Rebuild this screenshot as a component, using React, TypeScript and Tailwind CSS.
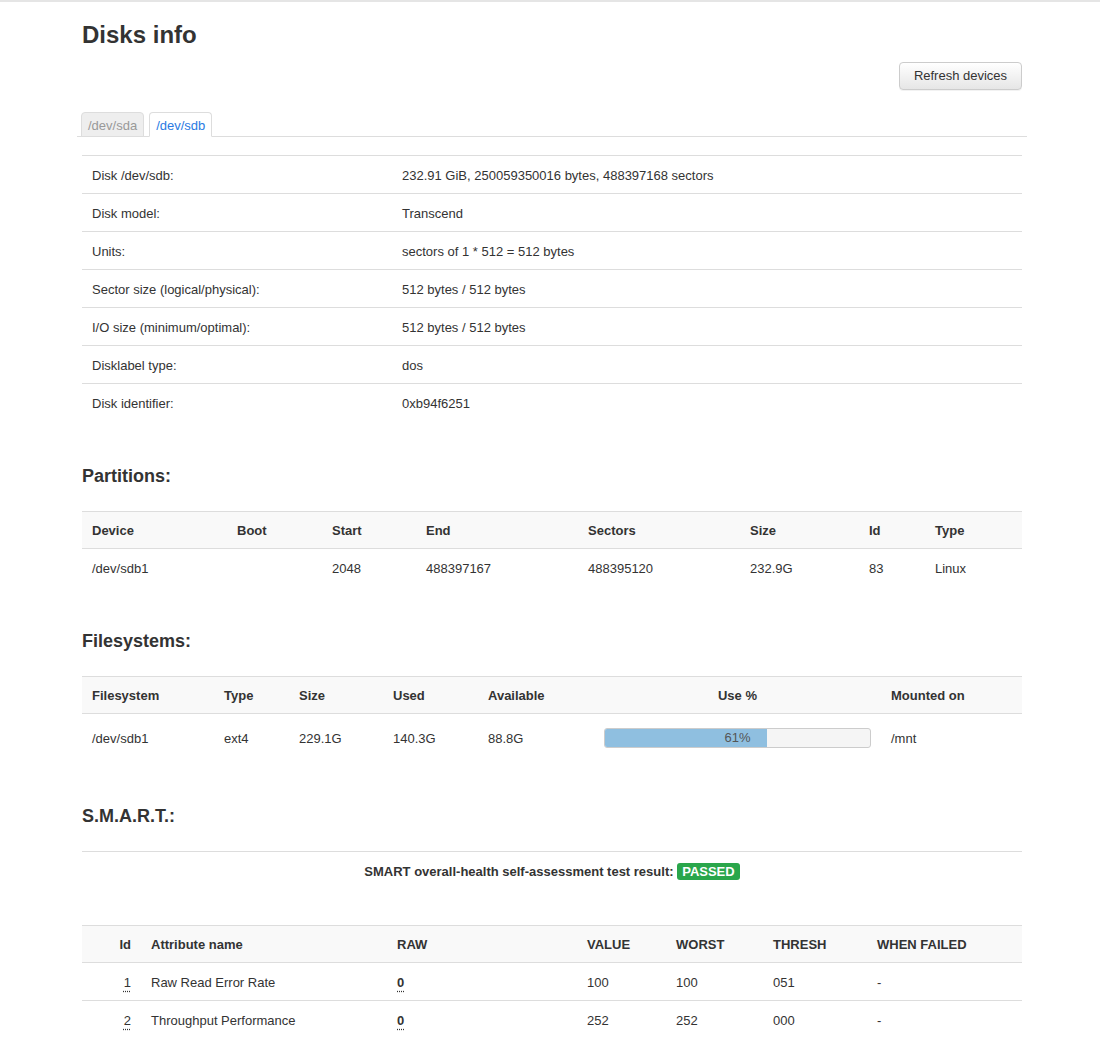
import React from 'react'

const info: [string, string][] = [
  ['Disk /dev/sdb:', '232.91 GiB, 250059350016 bytes, 488397168 sectors'],
  ['Disk model:', 'Transcend'],
  ['Units:', 'sectors of 1 * 512 = 512 bytes'],
  ['Sector size (logical/physical):', '512 bytes / 512 bytes'],
  ['I/O size (minimum/optimal):', '512 bytes / 512 bytes'],
  ['Disklabel type:', 'dos'],
  ['Disk identifier:', '0xb94f6251'],
]

const partCols = [
  ['Device', 'w-[145px]'],
  ['Boot', 'w-[95px]'],
  ['Start', 'w-[94px]'],
  ['End', 'w-[162px]'],
  ['Sectors', 'w-[162px]'],
  ['Size', 'w-[119px]'],
  ['Id', 'w-[66px]'],
  ['Type', 'w-[97px]'],
]
const partRow = ['/dev/sdb1', '', '2048', '488397167', '488395120', '232.9G', '83', 'Linux']

const smartRows = [
  { id: '1', name: 'Raw Read Error Rate', raw: '0', value: '100', worst: '100', thresh: '051', failed: '-' },
  { id: '2', name: 'Throughput Performance', raw: '0', value: '252', worst: '252', thresh: '000', failed: '-' },
]

function SectionTitle({ children }: { children: React.ReactNode }) {
  return <h3 className="text-[18px] font-bold leading-[20px]">{children}</h3>
}

const th = 'h-[37px] px-[10px] pt-[2px] text-left font-bold border-t border-b border-[#ddd] bg-[#f9f9f9]'
const td = 'px-[10px] pt-[2px]'

export default function App() {
  return (
    <main className="min-h-screen bg-white text-[13px] leading-[18px] text-[#333] font-['Liberation_Sans',Arial,sans-serif]">
      <div className="h-[2px] bg-[#e5e5e5]" />
      <div className="w-[940px] ml-[82px] pb-10">
        <h1 className="mt-[20px] text-[24px] font-bold leading-[26px]">Disks info</h1>

        <div className="flex justify-end mt-[14px]">
          <button className="h-[28px] w-[123px] rounded-[4px] border border-[#ccc] bg-gradient-to-b from-white to-[#e6e6e6] text-[13px] text-[#333] shadow-[0_1px_0_rgba(0,0,0,0.05)]">
            Refresh devices
          </button>
        </div>

        <div className="mt-[22px] -mx-[5px] pl-[4px] flex gap-[5px] border-b border-[#ddd]">
          <div className="h-[25px] px-[6px] pt-[4px] -mb-px rounded-t-[4px] border border-[#ddd] bg-[#eee] text-[#999]">
            /dev/sda
          </div>
          <div className="h-[25px] px-[6px] pt-[4px] -mb-px rounded-t-[4px] border border-[#ddd] border-b-white bg-white text-[#2a7ae2]">
            /dev/sdb
          </div>
        </div>

        <div className="mt-[18px]">
          {info.map(([k, v]) => (
            <div key={k} className="flex h-[38px] items-center pt-[2px] border-t border-[#ddd]">
              <div className="w-[310px] pl-[10px]">{k}</div>
              <div className="pl-[10px]">{v}</div>
            </div>
          ))}
        </div>

        <div className="mt-[45px]">
          <SectionTitle>Partitions:</SectionTitle>
        </div>
        <table className="mt-[25px] w-full table-fixed border-collapse">
          <thead>
            <tr>
              {partCols.map(([c, w]) => (
                <th key={c} className={`${th} ${w}`}>{c}</th>
              ))}
            </tr>
          </thead>
          <tbody>
            <tr className="h-[39px]">
              {partRow.map((c, i) => (
                <td key={i} className={td}>{c}</td>
              ))}
            </tr>
          </tbody>
        </table>

        <div className="mt-[43px]">
          <SectionTitle>Filesystems:</SectionTitle>
        </div>
        <table className="mt-[25px] w-full table-fixed border-collapse">
          <thead>
            <tr>
              <th className={`${th} w-[132px]`}>Filesystem</th>
              <th className={`${th} w-[75px]`}>Type</th>
              <th className={`${th} w-[94px]`}>Size</th>
              <th className={`${th} w-[95px]`}>Used</th>
              <th className={`${th} w-[116px]`}>Available</th>
              <th className={`${th} w-[287px] !text-center`}>Use %</th>
              <th className={`${th} w-[141px]`}>Mounted on</th>
            </tr>
          </thead>
          <tbody>
            <tr className="h-[49px]">
              <td className={td}>/dev/sdb1</td>
              <td className={td}>ext4</td>
              <td className={td}>229.1G</td>
              <td className={td}>140.3G</td>
              <td className={td}>88.8G</td>
              <td className="px-[10px]">
                <div className="relative h-[20px] rounded-[3px] border border-[#ccc] bg-[#f5f5f5] overflow-hidden">
                  <div className="h-full bg-[#8fbfe0]" style={{ width: '61%' }} />
                  <div className="absolute inset-0 flex items-center justify-center text-[#555]">61%</div>
                </div>
              </td>
              <td className={td}>/mnt</td>
            </tr>
          </tbody>
        </table>

        <div className="mt-[44px]">
          <SectionTitle>S.M.A.R.T.:</SectionTitle>
        </div>
        <div className="mt-[25px] border-t border-[#ddd] pt-[11px] text-center font-bold">
          SMART overall-health self-assessment test result:{' '}
          <span className="inline-block rounded-[3px] bg-[#2aa64b] px-[5px] leading-[17px] text-white">PASSED</span>
        </div>

        <table className="mt-[44px] w-full table-fixed border-collapse">
          <thead>
            <tr>
              <th className={`${th} w-[59px] !text-right`}>Id</th>
              <th className={`${th} w-[246px]`}>Attribute name</th>
              <th className={`${th} w-[190px]`}>RAW</th>
              <th className={`${th} w-[89px]`}>VALUE</th>
              <th className={`${th} w-[97px]`}>WORST</th>
              <th className={`${th} w-[104px]`}>THRESH</th>
              <th className={`${th} w-[155px]`}>WHEN FAILED</th>
            </tr>
          </thead>
          <tbody>
            {smartRows.map((r, i) => (
              <tr key={r.id} className={`h-[38px] ${i > 0 ? 'border-t border-[#ddd]' : ''}`}>
                <td className={`${td} text-right`}>
                  <abbr className="underline decoration-dotted underline-offset-[4px]">{r.id}</abbr>
                </td>
                <td className={td}>{r.name}</td>
                <td className={td}>
                  <abbr className="font-bold underline decoration-dotted underline-offset-[4px]">{r.raw}</abbr>
                </td>
                <td className={td}>{r.value}</td>
                <td className={td}>{r.worst}</td>
                <td className={td}>{r.thresh}</td>
                <td className={td}>{r.failed}</td>
              </tr>
            ))}
          </tbody>
        </table>
      </div>
    </main>
  )
}
